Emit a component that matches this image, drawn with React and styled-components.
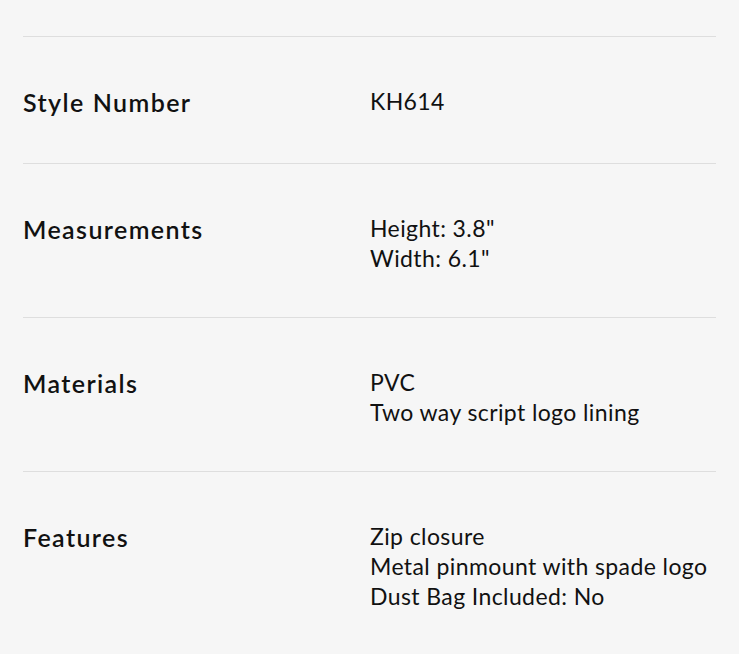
import React from "react";
import styled, { createGlobalStyle } from "styled-components";

const Global = createGlobalStyle`
  html, body { margin: 0; padding: 0; background: #f6f6f6; }
  body { font-family: "Lato", "Noto Sans", sans-serif; color: #111; }
`;

const Page = styled.div`
  padding: 36px 23px 0 23px;
  background: #f6f6f6;
  min-height: 654px;
  box-sizing: border-box;
`;

const List = styled.dl`
  margin: 0;
`;

const Row = styled.div`
  display: grid;
  grid-template-columns: 347px 1fr;
  align-items: start;
  border-top: 1px solid #dedede;
  padding: 49px 0 44px 0;
`;

const Label = styled.dt`
  margin: 0;
  font-size: 25px;
  line-height: 33px;
  font-weight: 600;
  letter-spacing: 1.4px;
  word-spacing: 0.5px;
  color: #111;
`;

const Value = styled.dd`
  margin: 0;
  font-size: 23px;
  line-height: 30px;
  font-weight: 400;
  letter-spacing: 0.4px;
  color: #111;
`;

const Line = styled.div``;

const specs = [
  { label: "Style Number", values: ["KH614"] },
  { label: "Measurements", values: ['Height: 3.8"', 'Width: 6.1"'] },
  { label: "Materials", values: ["PVC", "Two way script logo lining"] },
  {
    label: "Features",
    values: ["Zip closure", "Metal pinmount with spade logo", "Dust Bag Included: No"],
  },
];

export default function App() {
  return (
    <>
      <Global />
      <Page>
        <List>
          {specs.map((s) => (
            <Row key={s.label}>
              <Label>{s.label}</Label>
              <Value>
                {s.values.map((v) => (
                  <Line key={v}>{v}</Line>
                ))}
              </Value>
            </Row>
          ))}
        </List>
      </Page>
    </>
  );
}
